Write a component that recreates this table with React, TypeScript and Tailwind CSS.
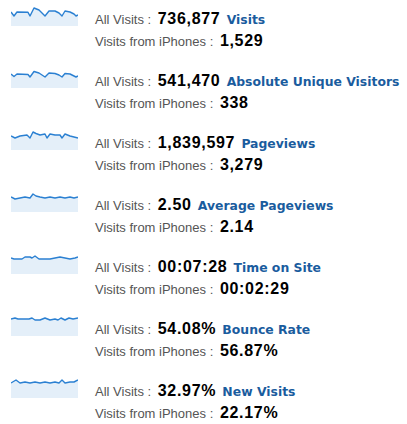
import React from 'react';

type Metric = {
  all: string;
  label: string;
  iphone: string;
  points: [number, number][];
};

const metrics: Metric[] = [
  {
    all: '736,877',
    label: 'Visits',
    iphone: '1,529',
    points: [[0,4],[3,8],[6,4],[17,4.3],[19,8],[23,0],[28,2],[34,8],[38,3],[44,3],[48,5],[51,8],[54,3],[59,4],[63,6],[65,8],[67,7]],
  },
  {
    all: '541,470',
    label: 'Absolute Unique Visitors',
    iphone: '338',
    points: [[0,4],[3,6.5],[6,4],[17,4.5],[19,7],[23,1.5],[28,3],[34,7],[38,3],[44,3.5],[48,5],[51,7],[54,3.5],[59,4],[63,6],[65,7],[67,6]],
  },
  {
    all: '1,839,597',
    label: 'Pageviews',
    iphone: '3,279',
    points: [[0,4],[4,6],[9,4],[16,3],[19,6],[22,0],[25,1.5],[29,3],[34,2],[36,6],[39,2],[44,3],[49,3],[51,6],[54,2],[59,4],[63,5],[67,6]],
  },
  {
    all: '2.50',
    label: 'Average Pageviews',
    iphone: '2.14',
    points: [[0,3],[4,5],[9,4],[14,3],[19,4],[22,0],[25,2],[29,3],[34,4],[39,3],[44,4],[49,3],[54,4],[59,3],[63,4],[67,3]],
  },
  {
    all: '00:07:28',
    label: 'Time on Site',
    iphone: '00:02:29',
    points: [[0,2],[3,3],[11,3],[14,1],[19,1],[21,2],[24,0],[28,3],[34,3],[39,3],[44,2],[49,1],[54,2],[59,3],[64,2],[67,1]],
  },
  {
    all: '54.08%',
    label: 'Bounce Rate',
    iphone: '56.87%',
    points: [[0,1],[4,0],[7,1],[18,1],[21,0],[24,2],[29,2],[34,0],[39,2],[44,1],[47,2],[50,0],[54,2],[58,0],[62,1],[67,0]],
  },
  {
    all: '32.97%',
    label: 'New Visits',
    iphone: '22.17%',
    points: [[0,3],[5,0],[9,3],[14,2],[19,3],[24,2],[29,3],[34,2],[39,3],[44,2],[48,3],[51,0],[54,3],[59,2],[63,2],[67,0]],
  },
];

const Sparkline = ({ points }: { points: [number, number][] }) => {
  const line = points.map(([x, y]) => `${x},${y + 1}`).join(' ');
  const area = `0,19 ${line} 67,19`;
  return (
    <svg width="67" height="19" viewBox="0 0 67 19" className="shrink-0">
      <polygon points={area} fill="#e4eff9" />
      <polyline points={line} fill="none" stroke="#2b80d2" strokeWidth="1.4" strokeLinejoin="round" />
    </svg>
  );
};

const numFont = 'ml-[3px] font-["Liberation_Sans",Arial,sans-serif] font-bold text-[16px] tracking-[0.7px] text-black';
const textFont = 'font-["Liberation_Sans",Arial,sans-serif] text-[13px] text-[#555]';

const Row = ({ m }: { m: Metric }) => (
  <div className="flex h-[62px] items-start pl-[11px]">
    <Sparkline points={m.points} />
    <div className="ml-[17px] flex flex-col">
      <div className="h-[22px] leading-[22px] whitespace-nowrap">
        <span className={textFont}>All Visits : </span>
        <span className={numFont}>{m.all}</span>{' '}
        <span className='ml-[2px] font-["DejaVu_Sans",sans-serif] font-bold text-[12.4px] text-[#1a5c9e]'>
          {m.label}
        </span>
      </div>
      <div className="h-[22px] leading-[22px] whitespace-nowrap">
        <span className={textFont}>Visits from iPhones : </span>
        <span className={numFont}>{m.iphone}</span>
      </div>
    </div>
  </div>
);

export default function App() {
  return (
    <div className="h-[424px] w-[407px] bg-white pt-[7px]">
      {metrics.map((m) => (
        <Row key={m.label} m={m} />
      ))}
    </div>
  );
}
